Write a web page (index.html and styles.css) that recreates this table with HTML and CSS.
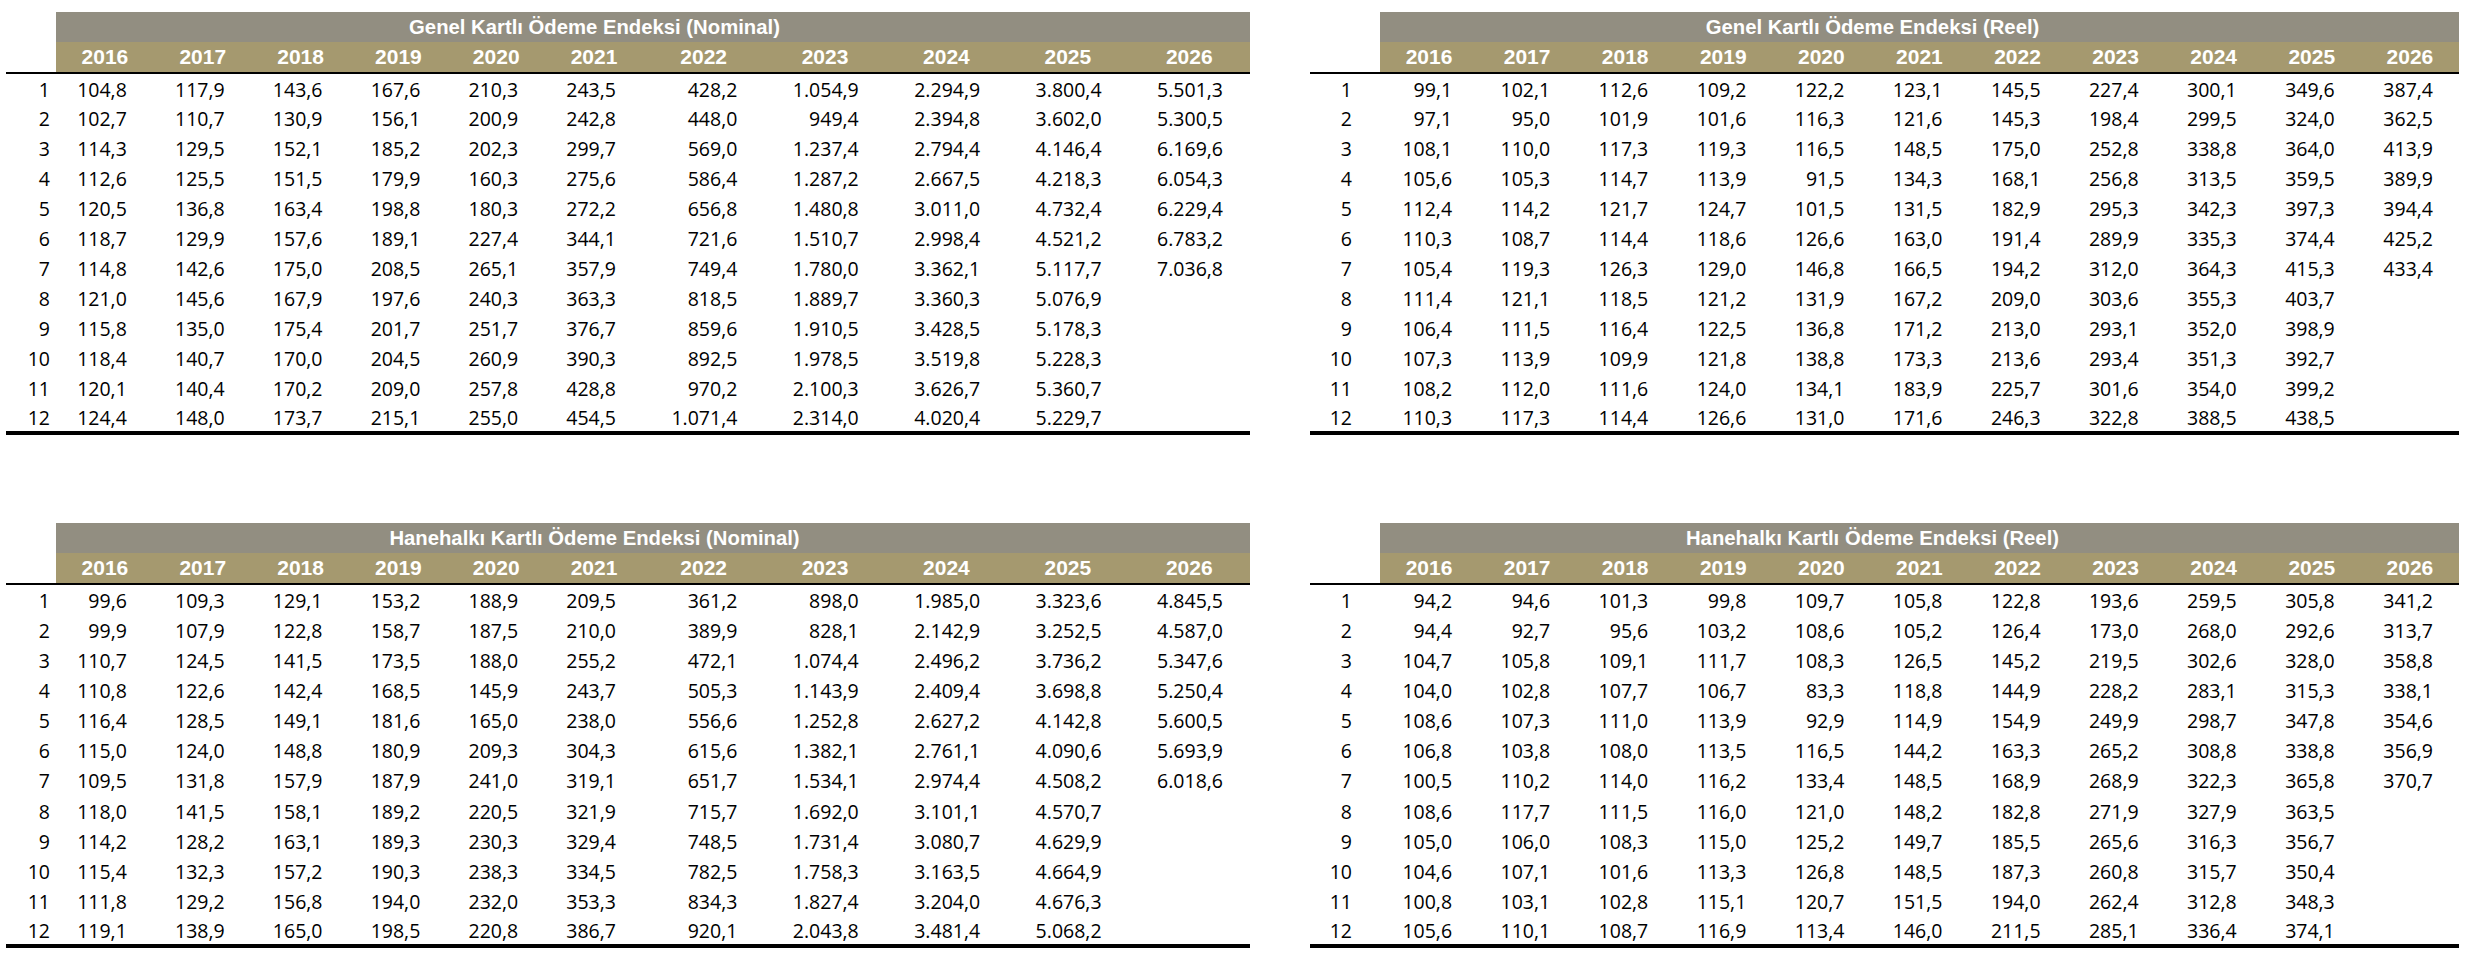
FILE: index.html
```html
<!DOCTYPE html>
<html lang="tr">
<head>
<meta charset="utf-8">
<title>Kartlı Ödeme Endeksi</title>
<link rel="stylesheet" href="styles.css">
</head>
<body>
<div class="sheet">
  <table class="idx idx-left idx-top">
    <colgroup><col class="c-m"><col class="c-a"><col class="c-a"><col class="c-a"><col class="c-a"><col class="c-a"><col class="c-a"><col class="c-b"><col class="c-b"><col class="c-b"><col class="c-b"><col class="c-b"></colgroup>
    <thead>
      <tr class="t-row"><th class="blank"></th><th class="title" colspan="11"><div class="title-text">Genel Kartlı Ödeme Endeksi (Nominal)</div></th></tr>
      <tr class="y-row"><th class="blank"></th><th>2016</th><th>2017</th><th>2018</th><th>2019</th><th>2020</th><th>2021</th><th>2022</th><th>2023</th><th>2024</th><th>2025</th><th>2026</th></tr>
    </thead>
    <tbody>
      <tr><td>1</td><td>104,8</td><td>117,9</td><td>143,6</td><td>167,6</td><td>210,3</td><td>243,5</td><td>428,2</td><td>1.054,9</td><td>2.294,9</td><td>3.800,4</td><td>5.501,3</td></tr>
      <tr><td>2</td><td>102,7</td><td>110,7</td><td>130,9</td><td>156,1</td><td>200,9</td><td>242,8</td><td>448,0</td><td>949,4</td><td>2.394,8</td><td>3.602,0</td><td>5.300,5</td></tr>
      <tr><td>3</td><td>114,3</td><td>129,5</td><td>152,1</td><td>185,2</td><td>202,3</td><td>299,7</td><td>569,0</td><td>1.237,4</td><td>2.794,4</td><td>4.146,4</td><td>6.169,6</td></tr>
      <tr><td>4</td><td>112,6</td><td>125,5</td><td>151,5</td><td>179,9</td><td>160,3</td><td>275,6</td><td>586,4</td><td>1.287,2</td><td>2.667,5</td><td>4.218,3</td><td>6.054,3</td></tr>
      <tr><td>5</td><td>120,5</td><td>136,8</td><td>163,4</td><td>198,8</td><td>180,3</td><td>272,2</td><td>656,8</td><td>1.480,8</td><td>3.011,0</td><td>4.732,4</td><td>6.229,4</td></tr>
      <tr><td>6</td><td>118,7</td><td>129,9</td><td>157,6</td><td>189,1</td><td>227,4</td><td>344,1</td><td>721,6</td><td>1.510,7</td><td>2.998,4</td><td>4.521,2</td><td>6.783,2</td></tr>
      <tr><td>7</td><td>114,8</td><td>142,6</td><td>175,0</td><td>208,5</td><td>265,1</td><td>357,9</td><td>749,4</td><td>1.780,0</td><td>3.362,1</td><td>5.117,7</td><td>7.036,8</td></tr>
      <tr><td>8</td><td>121,0</td><td>145,6</td><td>167,9</td><td>197,6</td><td>240,3</td><td>363,3</td><td>818,5</td><td>1.889,7</td><td>3.360,3</td><td>5.076,9</td><td></td></tr>
      <tr><td>9</td><td>115,8</td><td>135,0</td><td>175,4</td><td>201,7</td><td>251,7</td><td>376,7</td><td>859,6</td><td>1.910,5</td><td>3.428,5</td><td>5.178,3</td><td></td></tr>
      <tr><td>10</td><td>118,4</td><td>140,7</td><td>170,0</td><td>204,5</td><td>260,9</td><td>390,3</td><td>892,5</td><td>1.978,5</td><td>3.519,8</td><td>5.228,3</td><td></td></tr>
      <tr><td>11</td><td>120,1</td><td>140,4</td><td>170,2</td><td>209,0</td><td>257,8</td><td>428,8</td><td>970,2</td><td>2.100,3</td><td>3.626,7</td><td>5.360,7</td><td></td></tr>
      <tr class="last"><td>12</td><td>124,4</td><td>148,0</td><td>173,7</td><td>215,1</td><td>255,0</td><td>454,5</td><td>1.071,4</td><td>2.314,0</td><td>4.020,4</td><td>5.229,7</td><td></td></tr>
    </tbody>
  </table>

  <table class="idx idx-right idx-top">
    <colgroup><col class="c-m"><col class="c-r"><col class="c-r"><col class="c-r"><col class="c-r"><col class="c-r"><col class="c-r"><col class="c-r"><col class="c-r"><col class="c-r"><col class="c-r"><col class="c-r"></colgroup>
    <thead>
      <tr class="t-row"><th class="blank"></th><th class="title" colspan="11"><div class="title-text">Genel Kartlı Ödeme Endeksi (Reel)</div></th></tr>
      <tr class="y-row"><th class="blank"></th><th>2016</th><th>2017</th><th>2018</th><th>2019</th><th>2020</th><th>2021</th><th>2022</th><th>2023</th><th>2024</th><th>2025</th><th>2026</th></tr>
    </thead>
    <tbody>
      <tr><td>1</td><td>99,1</td><td>102,1</td><td>112,6</td><td>109,2</td><td>122,2</td><td>123,1</td><td>145,5</td><td>227,4</td><td>300,1</td><td>349,6</td><td>387,4</td></tr>
      <tr><td>2</td><td>97,1</td><td>95,0</td><td>101,9</td><td>101,6</td><td>116,3</td><td>121,6</td><td>145,3</td><td>198,4</td><td>299,5</td><td>324,0</td><td>362,5</td></tr>
      <tr><td>3</td><td>108,1</td><td>110,0</td><td>117,3</td><td>119,3</td><td>116,5</td><td>148,5</td><td>175,0</td><td>252,8</td><td>338,8</td><td>364,0</td><td>413,9</td></tr>
      <tr><td>4</td><td>105,6</td><td>105,3</td><td>114,7</td><td>113,9</td><td>91,5</td><td>134,3</td><td>168,1</td><td>256,8</td><td>313,5</td><td>359,5</td><td>389,9</td></tr>
      <tr><td>5</td><td>112,4</td><td>114,2</td><td>121,7</td><td>124,7</td><td>101,5</td><td>131,5</td><td>182,9</td><td>295,3</td><td>342,3</td><td>397,3</td><td>394,4</td></tr>
      <tr><td>6</td><td>110,3</td><td>108,7</td><td>114,4</td><td>118,6</td><td>126,6</td><td>163,0</td><td>191,4</td><td>289,9</td><td>335,3</td><td>374,4</td><td>425,2</td></tr>
      <tr><td>7</td><td>105,4</td><td>119,3</td><td>126,3</td><td>129,0</td><td>146,8</td><td>166,5</td><td>194,2</td><td>312,0</td><td>364,3</td><td>415,3</td><td>433,4</td></tr>
      <tr><td>8</td><td>111,4</td><td>121,1</td><td>118,5</td><td>121,2</td><td>131,9</td><td>167,2</td><td>209,0</td><td>303,6</td><td>355,3</td><td>403,7</td><td></td></tr>
      <tr><td>9</td><td>106,4</td><td>111,5</td><td>116,4</td><td>122,5</td><td>136,8</td><td>171,2</td><td>213,0</td><td>293,1</td><td>352,0</td><td>398,9</td><td></td></tr>
      <tr><td>10</td><td>107,3</td><td>113,9</td><td>109,9</td><td>121,8</td><td>138,8</td><td>173,3</td><td>213,6</td><td>293,4</td><td>351,3</td><td>392,7</td><td></td></tr>
      <tr><td>11</td><td>108,2</td><td>112,0</td><td>111,6</td><td>124,0</td><td>134,1</td><td>183,9</td><td>225,7</td><td>301,6</td><td>354,0</td><td>399,2</td><td></td></tr>
      <tr class="last"><td>12</td><td>110,3</td><td>117,3</td><td>114,4</td><td>126,6</td><td>131,0</td><td>171,6</td><td>246,3</td><td>322,8</td><td>388,5</td><td>438,5</td><td></td></tr>
    </tbody>
  </table>

  <table class="idx idx-left idx-bottom">
    <colgroup><col class="c-m"><col class="c-a"><col class="c-a"><col class="c-a"><col class="c-a"><col class="c-a"><col class="c-a"><col class="c-b"><col class="c-b"><col class="c-b"><col class="c-b"><col class="c-b"></colgroup>
    <thead>
      <tr class="t-row"><th class="blank"></th><th class="title" colspan="11"><div class="title-text">Hanehalkı Kartlı Ödeme Endeksi (Nominal)</div></th></tr>
      <tr class="y-row"><th class="blank"></th><th>2016</th><th>2017</th><th>2018</th><th>2019</th><th>2020</th><th>2021</th><th>2022</th><th>2023</th><th>2024</th><th>2025</th><th>2026</th></tr>
    </thead>
    <tbody>
      <tr><td>1</td><td>99,6</td><td>109,3</td><td>129,1</td><td>153,2</td><td>188,9</td><td>209,5</td><td>361,2</td><td>898,0</td><td>1.985,0</td><td>3.323,6</td><td>4.845,5</td></tr>
      <tr><td>2</td><td>99,9</td><td>107,9</td><td>122,8</td><td>158,7</td><td>187,5</td><td>210,0</td><td>389,9</td><td>828,1</td><td>2.142,9</td><td>3.252,5</td><td>4.587,0</td></tr>
      <tr><td>3</td><td>110,7</td><td>124,5</td><td>141,5</td><td>173,5</td><td>188,0</td><td>255,2</td><td>472,1</td><td>1.074,4</td><td>2.496,2</td><td>3.736,2</td><td>5.347,6</td></tr>
      <tr><td>4</td><td>110,8</td><td>122,6</td><td>142,4</td><td>168,5</td><td>145,9</td><td>243,7</td><td>505,3</td><td>1.143,9</td><td>2.409,4</td><td>3.698,8</td><td>5.250,4</td></tr>
      <tr><td>5</td><td>116,4</td><td>128,5</td><td>149,1</td><td>181,6</td><td>165,0</td><td>238,0</td><td>556,6</td><td>1.252,8</td><td>2.627,2</td><td>4.142,8</td><td>5.600,5</td></tr>
      <tr><td>6</td><td>115,0</td><td>124,0</td><td>148,8</td><td>180,9</td><td>209,3</td><td>304,3</td><td>615,6</td><td>1.382,1</td><td>2.761,1</td><td>4.090,6</td><td>5.693,9</td></tr>
      <tr><td>7</td><td>109,5</td><td>131,8</td><td>157,9</td><td>187,9</td><td>241,0</td><td>319,1</td><td>651,7</td><td>1.534,1</td><td>2.974,4</td><td>4.508,2</td><td>6.018,6</td></tr>
      <tr><td>8</td><td>118,0</td><td>141,5</td><td>158,1</td><td>189,2</td><td>220,5</td><td>321,9</td><td>715,7</td><td>1.692,0</td><td>3.101,1</td><td>4.570,7</td><td></td></tr>
      <tr><td>9</td><td>114,2</td><td>128,2</td><td>163,1</td><td>189,3</td><td>230,3</td><td>329,4</td><td>748,5</td><td>1.731,4</td><td>3.080,7</td><td>4.629,9</td><td></td></tr>
      <tr><td>10</td><td>115,4</td><td>132,3</td><td>157,2</td><td>190,3</td><td>238,3</td><td>334,5</td><td>782,5</td><td>1.758,3</td><td>3.163,5</td><td>4.664,9</td><td></td></tr>
      <tr><td>11</td><td>111,8</td><td>129,2</td><td>156,8</td><td>194,0</td><td>232,0</td><td>353,3</td><td>834,3</td><td>1.827,4</td><td>3.204,0</td><td>4.676,3</td><td></td></tr>
      <tr class="last"><td>12</td><td>119,1</td><td>138,9</td><td>165,0</td><td>198,5</td><td>220,8</td><td>386,7</td><td>920,1</td><td>2.043,8</td><td>3.481,4</td><td>5.068,2</td><td></td></tr>
    </tbody>
  </table>

  <table class="idx idx-right idx-bottom">
    <colgroup><col class="c-m"><col class="c-r"><col class="c-r"><col class="c-r"><col class="c-r"><col class="c-r"><col class="c-r"><col class="c-r"><col class="c-r"><col class="c-r"><col class="c-r"><col class="c-r"></colgroup>
    <thead>
      <tr class="t-row"><th class="blank"></th><th class="title" colspan="11"><div class="title-text">Hanehalkı Kartlı Ödeme Endeksi (Reel)</div></th></tr>
      <tr class="y-row"><th class="blank"></th><th>2016</th><th>2017</th><th>2018</th><th>2019</th><th>2020</th><th>2021</th><th>2022</th><th>2023</th><th>2024</th><th>2025</th><th>2026</th></tr>
    </thead>
    <tbody>
      <tr><td>1</td><td>94,2</td><td>94,6</td><td>101,3</td><td>99,8</td><td>109,7</td><td>105,8</td><td>122,8</td><td>193,6</td><td>259,5</td><td>305,8</td><td>341,2</td></tr>
      <tr><td>2</td><td>94,4</td><td>92,7</td><td>95,6</td><td>103,2</td><td>108,6</td><td>105,2</td><td>126,4</td><td>173,0</td><td>268,0</td><td>292,6</td><td>313,7</td></tr>
      <tr><td>3</td><td>104,7</td><td>105,8</td><td>109,1</td><td>111,7</td><td>108,3</td><td>126,5</td><td>145,2</td><td>219,5</td><td>302,6</td><td>328,0</td><td>358,8</td></tr>
      <tr><td>4</td><td>104,0</td><td>102,8</td><td>107,7</td><td>106,7</td><td>83,3</td><td>118,8</td><td>144,9</td><td>228,2</td><td>283,1</td><td>315,3</td><td>338,1</td></tr>
      <tr><td>5</td><td>108,6</td><td>107,3</td><td>111,0</td><td>113,9</td><td>92,9</td><td>114,9</td><td>154,9</td><td>249,9</td><td>298,7</td><td>347,8</td><td>354,6</td></tr>
      <tr><td>6</td><td>106,8</td><td>103,8</td><td>108,0</td><td>113,5</td><td>116,5</td><td>144,2</td><td>163,3</td><td>265,2</td><td>308,8</td><td>338,8</td><td>356,9</td></tr>
      <tr><td>7</td><td>100,5</td><td>110,2</td><td>114,0</td><td>116,2</td><td>133,4</td><td>148,5</td><td>168,9</td><td>268,9</td><td>322,3</td><td>365,8</td><td>370,7</td></tr>
      <tr><td>8</td><td>108,6</td><td>117,7</td><td>111,5</td><td>116,0</td><td>121,0</td><td>148,2</td><td>182,8</td><td>271,9</td><td>327,9</td><td>363,5</td><td></td></tr>
      <tr><td>9</td><td>105,0</td><td>106,0</td><td>108,3</td><td>115,0</td><td>125,2</td><td>149,7</td><td>185,5</td><td>265,6</td><td>316,3</td><td>356,7</td><td></td></tr>
      <tr><td>10</td><td>104,6</td><td>107,1</td><td>101,6</td><td>113,3</td><td>126,8</td><td>148,5</td><td>187,3</td><td>260,8</td><td>315,7</td><td>350,4</td><td></td></tr>
      <tr><td>11</td><td>100,8</td><td>103,1</td><td>102,8</td><td>115,1</td><td>120,7</td><td>151,5</td><td>194,0</td><td>262,4</td><td>312,8</td><td>348,3</td><td></td></tr>
      <tr class="last"><td>12</td><td>105,6</td><td>110,1</td><td>108,7</td><td>116,9</td><td>113,4</td><td>146,0</td><td>211,5</td><td>285,1</td><td>336,4</td><td>374,1</td><td></td></tr>
    </tbody>
  </table>
</div>
</body>
</html>
```

FILE: styles.css
```css
html, body {
  margin: 0;
  padding: 0;
  background: #ffffff;
}

.sheet {
  display: grid;
  grid-template-columns: 1244px 1149px;
  column-gap: 60px;
  row-gap: 88px;
  padding: 12px 0 0 6px;
  align-items: start;
}

.idx {
  border-collapse: collapse;
  table-layout: fixed;
  font-family: "Open Sans", "Lato", sans-serif;
  font-size: 19.5px;
  color: #000;
}

.idx-left { width: 1244px; }
.idx-right { width: 1149px; }

.idx-left .c-m { width: 50px; }
.idx-left .c-a { width: 97.83px; }
.idx-left .c-b { width: 121.4px; }
.idx-right .c-m { width: 70px; }
.idx-right .c-r { width: 98.09px; }

.idx th,
.idx td {
  padding: 0;
  white-space: nowrap;
  overflow: visible;
}

.t-row th {
  height: 30px;
}

.t-row .title {
  background: #928e81;
  color: #ffffff;
  font-family: "Liberation Sans", Arial, sans-serif;
  font-weight: bold;
  font-size: 20.3px;
  text-align: left;
  vertical-align: middle;
}

.idx-left .title-text { width: 1077px; text-align: center; }
.idx-right .title-text { width: 985px; text-align: center; }

.y-row th {
  height: 30px;
  background: #a5996f;
  color: #ffffff;
  font-family: "Liberation Sans", Arial, sans-serif;
  font-weight: bold;
  font-size: 21px;
  text-align: center;
  vertical-align: middle;
  border-bottom: 2px solid #000;
}

.t-row .blank,
.y-row .blank {
  background: transparent;
}

.idx tbody td {
  text-align: right;
  vertical-align: middle;
  padding-right: 27px;
  padding-top: 2px;
  line-height: 1;
}

.idx-top tbody tr { height: 30px; }
.idx-bottom tbody tr { height: 30.2px; }

.idx-left tbody td:first-child { padding-right: 6px; }
.idx-right tbody td:first-child { padding-right: 28px; }
.idx-right tbody td { padding-right: 26px; }

.idx tbody tr.last td {
  border-bottom: 4px solid #000;
}
```
